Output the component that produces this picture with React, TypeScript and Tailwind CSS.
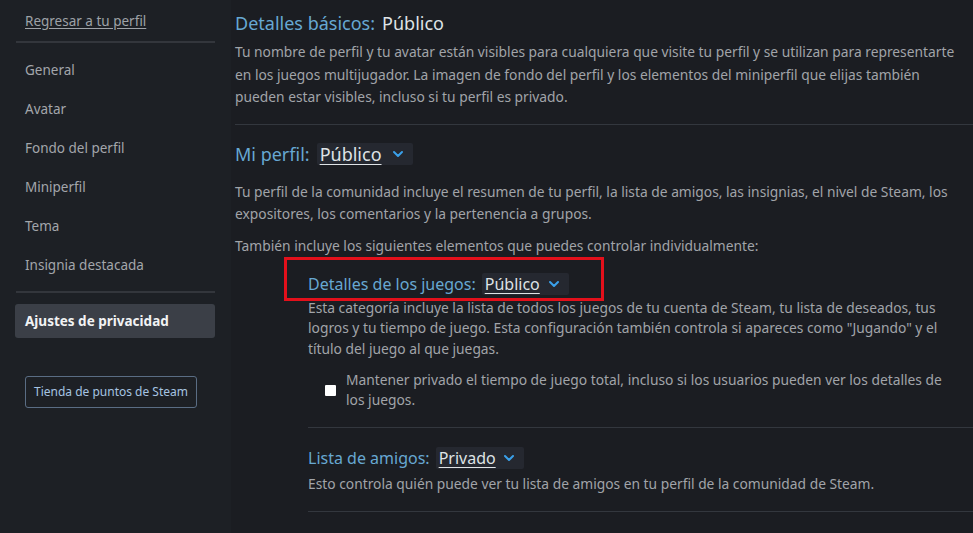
import React from "react";

const Chevron = () => (
  <svg width="14" height="14" viewBox="0 0 14 14" fill="none" className="ml-auto">
    <path d="M3 5 L7 9 L11 5" stroke="#3aa0ea" strokeWidth="2" strokeLinecap="round" strokeLinejoin="round" />
  </svg>
);

const Dropdown = ({ value, w }: { value: string; w: string }) => (
  <span className={`inline-flex items-center h-[22px] bg-[#252830] rounded-[2px] pl-[3px] pr-[8px] ${w}`}>
    <span className="underline underline-offset-[3px] decoration-1 text-[#dfe3e6]">{value}</span>
    <Chevron />
  </span>
);

const Line = ({ children }: { children: React.ReactNode }) => (
  <span className="block whitespace-nowrap">{children}</span>
);

export default function App() {
  const nav = ["General", "Avatar", "Fondo del perfil", "Miniperfil", "Tema", "Insignia destacada"];
  return (
    <div
      className="w-[973px] h-[533px] overflow-hidden flex bg-[#1b1d22] text-[#9fa3a8]"
      style={{ fontFamily: '"Noto Sans", "Open Sans", Arial, sans-serif' }}
    >
      <aside className="w-[231px] shrink-0 bg-[#1d2025] pl-[15px] pr-[15px] pt-[11px]">
        <div className="pl-[10px] text-[13.5px] leading-[20px] underline underline-offset-2 text-[#9ea2a7]">
          Regresar a tu perfil
        </div>
        <div className="h-[2px] bg-[#33363c] mt-[10px] ml-[1px] w-[199px]" />
        <div className="flex flex-col pt-[17px]">
          {nav.map((n) => (
            <div key={n} className="pl-[10px] h-[39px] text-[13.5px] leading-[20px] text-[#a3a6ab]">
              {n}
            </div>
          ))}
        </div>
        <div className="h-[2px] bg-[#33363c] -mt-[3px] ml-[1px] w-[199px]" />
        <div className="mt-[11px] w-[200px] h-[34px] bg-[#3b3f47] rounded-[3px] flex items-center pl-[10px] text-[13.5px] font-bold text-[#f2f3f4]">
          Ajustes de privacidad
        </div>
        <div className="mt-[38px] ml-[10px] w-[172px] h-[32px] border border-[#5a6d84] rounded-[3px] flex items-center justify-center text-[12px] text-[#a6c4e2]">
          Tienda de puntos de Steam
        </div>
      </aside>

      <main className="flex-1 pl-[4px] pt-[10px]">
        <div className="text-[18px] leading-[26px]">
          <span className="text-[#67a8d2]">Detalles básicos:</span>
          <span className="text-[#dfe3e6] ml-[7px]">Público</span>
        </div>
        <div className="mt-[5px] text-[13.8px] leading-[22.5px] text-[#a1a4a9]">
          <Line>Tu nombre de perfil y tu avatar están visibles para cualquiera que visite tu perfil y se utilizan para representarte</Line>
          <Line>en los juegos multijugador. La imagen de fondo del perfil y los elementos del miniperfil que elijas también</Line>
          <Line>pueden estar visibles, incluso si tu perfil es privado.</Line>
        </div>
        <div className="h-[1px] bg-[#33373e] mt-[15px]" />

        <div className="mt-[17px] flex items-center text-[18px] leading-[24px]">
          <span className="text-[#67a8d2] mr-[7px]">Mi perfil:</span>
          <Dropdown value="Público" w="w-[96px]" />
        </div>
        <div className="mt-[15px] text-[13.8px] leading-[22px] text-[#a1a4a9]">
          <Line>Tu perfil de la comunidad incluye el resumen de tu perfil, la lista de amigos, las insignias, el nivel de Steam, los</Line>
          <Line>expositores, los comentarios y la pertenencia a grupos.</Line>
        </div>
        <div className="mt-[10px] text-[13.8px] leading-[22px] text-[#a1a4a9]">
          También incluye los siguientes elementos que puedes controlar individualmente:
        </div>

        <div className="pl-[73px]">
          <div className="relative mt-[15px] flex items-center text-[16px] leading-[22px] h-[24px]">
            <div className="absolute left-[-24px] top-[-15px] w-[320px] h-[44px] border-[3px] border-[#e3101b]" />
            <span className="text-[#67a8d2] mr-[6px]">Detalles de los juegos:</span>
            <Dropdown value="Público" w="w-[87px]" />
          </div>
          <div className="mt-[2px] text-[13.8px] leading-[20.5px] text-[#a1a4a9]">
            <Line>Esta categoría incluye la lista de todos los juegos de tu cuenta de Steam, tu lista de deseados, tus</Line>
            <Line>logros y tu tiempo de juego. Esta configuración también controla si apareces como "Jugando" y el</Line>
            <Line>título del juego al que juegas.</Line>
          </div>
          <div className="mt-[11px] flex items-center pl-[17px]">
            <div className="w-[11px] h-[11px] bg-white rounded-[1px] shrink-0" />
            <div className="ml-[10px] text-[13.8px] leading-[20px] text-[#a1a4a9]">
              <Line>Mantener privado el tiempo de juego total, incluso si los usuarios pueden ver los detalles de</Line>
              <Line>los juegos.</Line>
            </div>
          </div>
          <div className="h-[1px] bg-[#33373e] mt-[17px]" />

          <div className="mt-[19px] flex items-center text-[16px] leading-[22px] h-[22px]">
            <span className="text-[#67a8d2] mr-[6px]">Lista de amigos:</span>
            <Dropdown value="Privado" w="w-[88px]" />
          </div>
          <div className="mt-[5px] text-[13.8px] leading-[20px] text-[#a1a4a9]">
            <Line>Esto controla quién puede ver tu lista de amigos en tu perfil de la comunidad de Steam.</Line>
          </div>
          <div className="h-[1px] bg-[#33373e] mt-[17px]" />
        </div>
      </main>
    </div>
  );
}
